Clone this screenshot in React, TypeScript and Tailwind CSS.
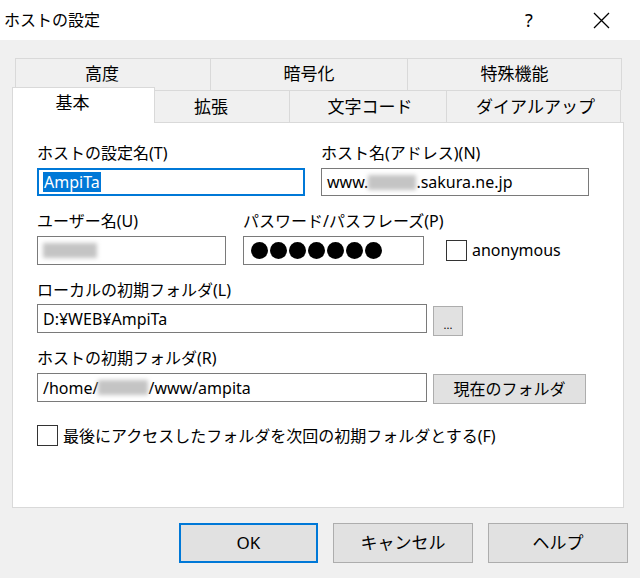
import React from 'react';

const Blur: React.FC<{ w: string }> = ({ w }) => (
    <span className={`inline-block h-[15px] ${w} bg-[#c4c4c4] blur-[2px] align-middle`} />
);

const CheckBox: React.FC = () => (
    <span className="inline-block w-[21px] h-[21px] bg-white border border-[#333333] shrink-0" />
);

const TopTab: React.FC<{ label: string; w: string; shift?: boolean; last?: boolean }> = ({ label, w, shift, last }) => (
    <div
        className={`${w} h-[32px] border-t border-l border-[#d9d9d9] ${last ? 'border-r' : ''} flex items-center justify-center text-[17px] pb-[1px] ${shift ? 'pr-[22px]' : ''}`}
    >
        {label}
    </div>
);

const App: React.FC = () => {
    return (
        <div className="w-[640px] h-[578px] bg-[#f0f0f0] text-black overflow-hidden flex flex-col font-['Noto_Sans','Noto_Sans_CJK_JP',sans-serif]">
            {/* title bar */}
            <div className="h-[40px] bg-white flex items-center pl-[4px] shrink-0">
                <span className="text-[16px] leading-[20px]">ホストの設定</span>
                <span className="ml-auto text-[18px] leading-[20px] w-[20px] text-center mr-[54px]">?</span>
                <svg width="17" height="17" viewBox="0 0 17 17" className="mr-[30px]">
                    <path d="M1 1 L16 16 M16 1 L1 16" stroke="#000" strokeWidth="1.3" fill="none" />
                </svg>
            </div>

            <div className="pl-[12px] pt-[18px]">
                {/* tabs, upper row */}
                <div className="ml-[3px] flex">
                    <TopTab label="高度" w="w-[195px]" shift />
                    <TopTab label="暗号化" w="w-[197px]" />
                    <TopTab label="特殊機能" w="w-[215px]" last />
                </div>
                {/* tabs, lower row */}
                <div className="flex items-end h-[32px]">
                    <div className="relative z-10 w-[143px] h-[36px] -mb-px bg-white border-t border-l border-r border-[#d9d9d9] flex items-center justify-center text-[17px] pr-[22px] pb-[6px]">
                        基本
                    </div>
                    <div className="w-[135px] h-[32px] border-t border-r border-[#d9d9d9] flex items-center justify-center text-[17px] pr-[22px]">
                        拡張
                    </div>
                    <div className="w-[157px] h-[32px] border-t border-r border-[#d9d9d9] flex items-center justify-center text-[17px] pl-[4px]">
                        文字コード
                    </div>
                    <div className="w-[174px] h-[32px] border-t border-r border-[#d9d9d9] flex items-center justify-center text-[17px] pl-[4px]">
                        ダイアルアップ
                    </div>
                </div>

                {/* panel */}
                <div className="w-[612px] h-[386px] bg-white border border-[#d9d9d9] pl-[24px] pt-[20px] text-[16px] leading-[20px]">
                    <div className="flex gap-[16px]">
                        <div className="w-[268px]">
                            <div>ホストの設定名(T)</div>
                            <div className="mt-[5px] h-[28px] border-2 border-[#0078d7] flex items-center pl-[4px]">
                                <span className="bg-[#0078d7] text-white px-[1px] leading-[20px]">AmpiTa</span>
                            </div>
                        </div>
                        <div className="w-[268px]">
                            <div>ホスト名(アドレス)(N)</div>
                            <div className="mt-[5px] h-[28px] border border-[#7a7a7a] flex items-center pl-[5px] whitespace-nowrap">
                                <span>www.</span>
                                <Blur w="w-[48px]" />
                                <span>.sakura.ne.jp</span>
                            </div>
                        </div>
                    </div>

                    <div className="flex mt-[15px]">
                        <div className="w-[189px]">
                            <div>ユーザー名(U)</div>
                            <div className="mt-[5px] h-[29px] border border-[#7a7a7a] flex items-center pl-[5px]">
                                <Blur w="w-[54px]" />
                            </div>
                        </div>
                        <div className="w-[181px] ml-[17px]">
                            <div className="whitespace-nowrap">パスワード/パスフレーズ(P)</div>
                            <div className="mt-[5px] h-[29px] border border-[#7a7a7a] flex items-center pl-[7px] gap-[2px]">
                                {Array.from({ length: 7 }).map((_, i) => (
                                    <span key={i} className="w-[17px] h-[17px] rounded-full bg-black" />
                                ))}
                            </div>
                        </div>
                        <div className="ml-[22px] self-end h-[29px] flex items-center gap-[5px] pb-[1px]">
                            <CheckBox />
                            <span>anonymous</span>
                        </div>
                    </div>

                    <div className="mt-[15px]">ローカルの初期フォルダ(L)</div>
                    <div className="flex items-start mt-[4px]">
                        <div className="w-[390px] h-[29px] border border-[#7a7a7a] flex items-center pl-[5px]">
                            D:¥WEB¥AmpiTa
                        </div>
                        <button className="ml-[6px] mt-[2px] w-[30px] h-[30px] bg-[#e1e1e1] border border-[#adadad] text-[11px] leading-none pt-[6px]">
                            ...
                        </button>
                    </div>

                    <div className="mt-[12px]">ホストの初期フォルダ(R)</div>
                    <div className="flex items-start mt-[5px]">
                        <div className="w-[390px] h-[29px] border border-[#7a7a7a] flex items-center pl-[5px] whitespace-nowrap">
                            <span>/home/</span>
                            <Blur w="w-[50px]" />
                            <span>/www/ampita</span>
                        </div>
                        <button className="ml-[6px] mt-[1px] w-[153px] h-[30px] bg-[#e1e1e1] border border-[#adadad] text-[16px]">
                            現在のフォルダ
                        </button>
                    </div>

                    <div className="mt-[21px] flex items-center gap-[5px]">
                        <CheckBox />
                        <span>最後にアクセスしたフォルダを次回の初期フォルダとする(F)</span>
                    </div>
                </div>
            </div>

            {/* buttons */}
            <div className="mt-[15px] flex justify-end gap-[15px] pr-[12px] text-[17px]">
                <button className="w-[139px] h-[40px] bg-[#e1e1e1] border-2 border-[#0078d7]">OK</button>
                <button className="w-[140px] h-[40px] bg-[#e1e1e1] border border-[#adadad]">キャンセル</button>
                <button className="w-[140px] h-[40px] bg-[#e1e1e1] border border-[#adadad]">ヘルプ</button>
            </div>
        </div>
    );
};

export default App;
